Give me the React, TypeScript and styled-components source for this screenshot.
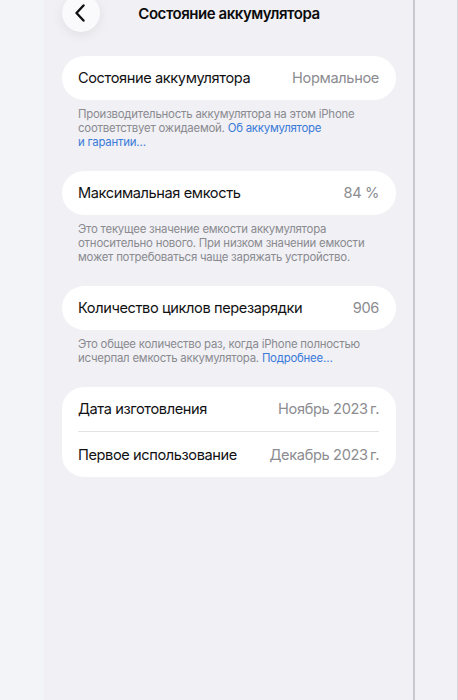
import React from 'react';
import styled, {createGlobalStyle} from 'styled-components';

const GlobalStyle = createGlobalStyle`
  html, body {
    margin: 0;
    padding: 0;
    height: 700px;
    overflow: hidden;
    background: #f4f5f8;
  }
  body {
    font-family: Inter, "Noto Sans", "Liberation Sans", sans-serif;
    -webkit-font-smoothing: antialiased;
  }
`;

const Link = styled.span`
  color: #3a7ad8;
`;

type Row = {label: string; value: string};

type Section = {
  rows: Row[];
  note?: React.ReactNode;
};

const getSections = (): Section[] => [
  {
    rows: [{label: 'Состояние аккумулятора', value: 'Нормальное'}],
    note: (
      <>
        Производительность аккумулятора на этом iPhone<br/>
        соответствует ожидаемой. <Link>Об аккумуляторе<br/>и гарантии…</Link>
      </>
    ),
  },
  {
    rows: [{label: 'Максимальная емкость', value: '84 %'}],
    note: (
      <>
        Это текущее значение емкости аккумулятора<br/>
        относительно нового. При низком значении емкости<br/>
        может потребоваться чаще заряжать устройство.
      </>
    ),
  },
  {
    rows: [{label: 'Количество циклов перезарядки', value: '906'}],
    note: (
      <>
        Это общее количество раз, когда iPhone полностью<br/>
        исчерпал емкость аккумулятора. <Link>Подробнее…</Link>
      </>
    ),
  },
  {
    rows: [
      {label: 'Дата изготовления', value: 'Ноябрь 2023\u2009г.'},
      {label: 'Первое использование', value: 'Декабрь 2023\u2009г.'},
    ],
  },
];

export default function App() {
  const sections = getSections();

  return (
    <>
      <GlobalStyle/>
      <Page>
        <LeftStrip/>
        <Main>
          <Header>
            <BackButton aria-label="Назад">
              <svg width="12" height="18" viewBox="0 0 12 18" fill="none">
                <path d="M9.5 1.5L2.5 9l7 7.5" stroke="#111" strokeWidth="2.4" strokeLinecap="round" strokeLinejoin="round"/>
              </svg>
            </BackButton>
            <Title>Состояние аккумулятора</Title>
            <HeaderSpacer/>
          </Header>
          {sections.map((section, i) => (
            <Group key={i}>
              <Card>
                {section.rows.map((row, j) => (
                  <CardRow key={row.label} $divided={j > 0}>
                    <Label>{row.label}</Label>
                    <Value>{row.value}</Value>
                  </CardRow>
                ))}
              </Card>
              {section.note && <Note>{section.note}</Note>}
            </Group>
          ))}
        </Main>
        <Divider/>
        <RightPanel/>
      </Page>
    </>
  );
}

const Page = styled.div`
  display: flex;
  width: 458px;
  height: 700px;
`;

const LeftStrip = styled.div`
  width: 44px;
  flex-shrink: 0;
  background: #f3f4f7;
`;

const Main = styled.div`
  width: 369px;
  flex-shrink: 0;
  background: #f0f0f5;
  padding: 0 17px 0 18px;
  box-sizing: border-box;
`;

const Header = styled.div`
  display: flex;
  align-items: center;
  height: 38px;
  margin-top: -6px;
  margin-bottom: 24px;
`;

const BackButton = styled.div`
  width: 38px;
  height: 38px;
  border-radius: 50%;
  background: #fafafc;
  box-shadow: 0 3px 12px rgba(0, 0, 0, 0.07);
  display: flex;
  align-items: center;
  justify-content: center;
  padding-right: 3px;
  box-sizing: border-box;
  flex-shrink: 0;
`;

const Title = styled.div`
  flex: 1;
  text-align: center;
  font-size: 15px;
  font-weight: 600;
  color: #0b0b0c;
  letter-spacing: -0.45px;
`;

const HeaderSpacer = styled.div`
  width: 38px;
  flex-shrink: 0;
`;

const Group = styled.div`
  margin-bottom: 22px;
`;

const Card = styled.div`
  background: #ffffff;
  border-radius: 22px;
  padding: 0 17px 0 16px;
`;

const CardRow = styled.div<{$divided: boolean}>`
  display: flex;
  align-items: center;
  justify-content: space-between;
  height: ${props => props.$divided ? 46 : 44}px;
  border-top: ${props => props.$divided ? '1px solid #e2e2e7' : 'none'};
  box-sizing: border-box;
`;

const Label = styled.span`
  font-size: 14.6px;
  color: #111113;
  letter-spacing: -0.4px;
`;

const Value = styled.span`
  font-size: 14.6px;
  color: #8c8c91;
  letter-spacing: -0.35px;
`;

const Note = styled.div`
  padding: 7px 16px 0 16px;
  font-size: 11.4px;
  line-height: 14px;
  color: #8a8a8f;
  letter-spacing: -0.22px;
`;

const Divider = styled.div`
  width: 2px;
  flex-shrink: 0;
  background: #c9c8ce;
`;

const RightPanel = styled.div`
  flex: 1;
  background: #f2f2f6;
  border-right: 1px solid #d6d6db;
`;
